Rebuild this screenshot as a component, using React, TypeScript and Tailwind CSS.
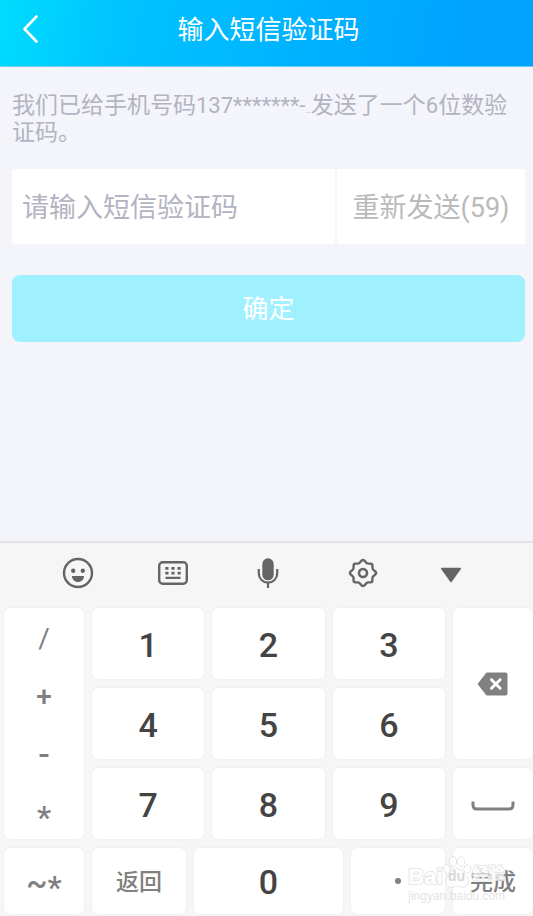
import React from "react";

function Key({ className = "", children, label }: { className?: string; children: React.ReactNode; label?: string }) {
  return (
    <button
      type="button"
      aria-label={label}
      className={`flex items-center justify-center rounded-md bg-white shadow-[0_0_2px_#dfe5ea] ${className}`}
    >
      {children}
    </button>
  );
}

function SmileIcon() {
  return (
    <svg viewBox="0 0 32 32" className="size-8" fill="none" aria-hidden="true">
      <circle cx="16" cy="16" r="14" stroke="#666464" strokeWidth="2.4" />
      <circle cx="11.2" cy="13.8" r="2.2" fill="#666464" />
      <circle cx="20.8" cy="13.8" r="2.2" fill="#666464" />
      <path d="M10 19h12c0 3.400-2.600 6-6 6s-6-2.600-6-6z" fill="#666464" />
    </svg>
  );
}

function KeyboardIcon() {
  return (
    <svg viewBox="0 0 32 32" className="size-8" fill="none" aria-hidden="true">
      <rect x="2.200" y="5.200" width="27.600" height="21.600" rx="3.500" stroke="#666464" strokeWidth="2.400" />
      <path
        d="M8.300 10h3.200v2.700H8.300zM14.400 10h3.200v2.700h-3.200zM20.500 10h3.200v2.700h-3.200zM8.300 14.700h3.200v2.700H8.300zM14.400 14.700h3.200v2.700h-3.200zM20.500 14.700h3.200v2.700h-3.200zM8.500 19.800h15v2.200h-15z"
        fill="#666464"
      />
    </svg>
  );
}

function MicIcon() {
  return (
    <svg viewBox="0 0 32 32" className="size-8" fill="none" aria-hidden="true">
      <rect x="10.300" y="1.300" width="11.400" height="22" rx="5.700" fill="#666464" />
      <path d="M6.800 12v4.500a9.200 9.200 0 0 0 18.400 0V12" stroke="#666464" strokeWidth="2.200" />
      <path d="M16 25v6" stroke="#666464" strokeWidth="2.200" />
    </svg>
  );
}

function GearIcon() {
  return (
    <svg viewBox="0 0 32 32" className="size-8" fill="none" stroke="#666464" aria-hidden="true">
      <path
        d="M14.600 3.600Q16 2.200 17.400 3.600L19.400 5.800Q20.200 6.600 21.400 6.600L23.600 6.600Q25.400 6.600 25.400 8.400L25.400 10.600Q25.400 11.800 26.200 12.600L28.400 14.600Q29.800 16 28.400 17.400L26.200 19.400Q25.400 20.200 25.400 21.400L25.400 23.600Q25.400 25.400 23.600 25.400L21.400 25.400Q20.200 25.400 19.400 26.200L17.400 28.400Q16 29.800 14.600 28.400L12.600 26.200Q11.800 25.400 10.600 25.400L8.400 25.400Q6.600 25.400 6.600 23.600L6.600 21.400Q6.600 20.200 5.800 19.400L3.600 17.400Q2.200 16 3.600 14.600L5.800 12.600Q6.600 11.800 6.600 10.600L6.600 8.400Q6.600 6.600 8.400 6.600L10.600 6.600Q11.800 6.600 12.600 5.800Z"
        strokeWidth="2.400"
        strokeLinejoin="round"
      />
      <circle cx="16" cy="16" r="4" strokeWidth="2.600" />
    </svg>
  );
}

function Watermark() {
  return (
    <div
      aria-hidden="true"
      className="pointer-events-none absolute right-7 bottom-3 flex flex-col font-['Liberation_Sans','Noto_Sans_CJK_SC',sans-serif] leading-none opacity-80"
    >
      <div className="flex h-8 items-end text-[22px] font-bold text-white [-webkit-text-stroke:2px_#e2e2e2] [paint-order:stroke]">
        <span>Bai</span>
        <span className="relative flex h-8 w-7 shrink-0 items-end justify-center">
          <svg viewBox="0 0 28 32" className="absolute inset-0 h-8 w-7" fill="#fff" stroke="#c8c8c8" aria-hidden="true">
            <ellipse cx="3.800" cy="13" rx="3" ry="4" transform="rotate(-15 3.800 13)" strokeWidth="1" />
            <ellipse cx="10" cy="5.500" rx="3.200" ry="4.600" />
            <ellipse cx="18" cy="5.500" rx="3.200" ry="4.600" />
            <ellipse cx="24.200" cy="13" rx="3" ry="4" transform="rotate(15 24.200 13)" />
            <path d="M14 13c5 0 6 4 9 7 4 5 2 11-3 11-3 0-4-1-6-1s-3 1-6 1c-5 0-7-6-3-11 3-3 4-7 9-7z" />
          </svg>
          <span className="relative pb-0.5 text-sm text-[#cfcfcf] [-webkit-text-stroke:0px]">du</span>
        </span>
        <span className="pb-0.5 pl-0.5 text-base">经验</span>
      </div>
      <div className="text-xs text-[#dedede]">jingyan.baidu.com</div>
    </div>
  );
}

export default function App() {
  return (
    <div className="flex min-h-screen flex-col bg-[#f4f5fa] font-[Roboto,'Noto_Sans_CJK_SC',sans-serif]">
      <header className="grid h-[67px] grid-cols-[60px_1fr_56px] items-center border-b border-[#6cc9f8] bg-[linear-gradient(100deg,#00dcff_0%,#00c4ff_22%,#00a4ff_85%)] pb-1.5 text-white">
        <button type="button" aria-label="返回上一页" className="flex justify-center pb-0.5">
          <svg viewBox="0 0 18 30" className="h-[30px] w-[18px]" fill="none" stroke="#fff" aria-hidden="true">
            <path d="M15.500 2.500 3.500 15l12 12.500" strokeWidth="2.600" strokeLinecap="round" strokeLinejoin="round" />
          </svg>
        </button>
        <h1 className="text-center text-[26px] leading-9">输入短信验证码</h1>
      </header>

      <main className="flex flex-col pr-2 pl-3">
        <p className="pt-[25px] text-[23px] leading-[27px] text-[#b3b3c1]">
          我们已给手机号码<span className="text-[22px] leading-none">137*******-</span>
          <span className="text-[10px] leading-none">..</span>发送了一个
          <span className="text-[22px] leading-none">6</span>位数验证码。
        </p>
        <form className="mt-[23px] flex flex-col" onSubmit={(e) => e.preventDefault()}>
          <div className="flex h-[75px] bg-white">
            <input
              type="text"
              aria-label="短信验证码"
              placeholder="请输入短信验证码"
              className="min-w-0 flex-1 px-2.5 pt-1 text-[27px] outline-none placeholder:text-[#b3b3c1] placeholder:opacity-100"
            />
            <button type="button" className="w-[190px] border-l-2 border-[#f4f5f8] pt-1 text-[27px] text-[#bababa]">
              重新发送(59)
            </button>
          </div>
          <button type="submit" className="mt-[31px] h-[67px] rounded-lg bg-[#9ff1ff] pt-0.5 text-[26px] text-white">
            确定
          </button>
        </form>
      </main>

      <section aria-label="键盘" className="relative mt-auto border-t-2 border-[#e2e3e8] bg-[#f6f6f6] pb-0.5 pl-1">
        <div className="grid h-[65px] grid-cols-5 items-center pr-7 pb-1.5 pl-[26px]">
          <button type="button" aria-label="表情" className="flex justify-center"><SmileIcon /></button>
          <button type="button" aria-label="切换键盘" className="flex justify-center"><KeyboardIcon /></button>
          <button type="button" aria-label="语音" className="flex justify-center"><MicIcon /></button>
          <button type="button" aria-label="设置" className="flex justify-center"><GearIcon /></button>
          <button type="button" aria-label="收起" className="flex justify-center pt-1 pr-3.5">
            <svg viewBox="0 0 22 16" className="h-4 w-[22px]" aria-hidden="true">
              <path d="M1.700 1.500h18.600L11 14.500z" fill="#666464" stroke="#666464" strokeWidth="1.500" strokeLinejoin="round" />
            </svg>
          </button>
        </div>

        <div className="grid grid-cols-[80px_1fr_1fr_1fr_80px] grid-rows-[71px_71px_71px] gap-x-2 gap-y-[9px] text-[34px] font-medium text-[#444]">
          <div className="row-span-3 grid grid-rows-4 rounded-md bg-white text-[28px] text-[#808080] shadow-[0_0_2px_#dfe5ea]">
            <button type="button" className="pt-1 font-normal">/</button>
            <button type="button" className="pt-1">+</button>
            <button type="button" className="pt-1 text-[34px]">-</button>
            <button type="button" className="pt-3 text-[32px]">*</button>
          </div>
          <Key className="pt-1">1</Key>
          <Key className="pt-1">2</Key>
          <Key className="pt-1">3</Key>
          <Key label="删除" className="row-span-2">
            <svg viewBox="0 0 32 24" className="h-6 w-8" aria-hidden="true">
              <path d="M9.500.5H28.500Q30.500.5 30.500 2.500V21.500Q30.500 23.500 28.500 23.500H9.500L.5 12z" fill="#808080" />
              <path d="m14.500 7.700 8.600 8.600m0-8.600-8.600 8.600" stroke="#fff" strokeWidth="3" strokeLinecap="round" />
            </svg>
          </Key>
          <Key className="pt-1">4</Key>
          <Key className="pt-1">5</Key>
          <Key className="pt-1">6</Key>
          <Key className="pt-1">7</Key>
          <Key className="pt-1">8</Key>
          <Key className="pt-1">9</Key>
          <Key label="空格" className="pt-1">
            <svg viewBox="0 0 44 12" className="h-3 w-11" fill="none" aria-hidden="true">
              <path d="M2 1.500V5q0 4 4 4h32q4 0 4-4V1.500" stroke="#808080" strokeWidth="3" />
            </svg>
          </Key>
        </div>

        <div className="mt-[9px] flex h-[66px] gap-2 text-[23px] font-medium text-[#808080]">
          <Key className="w-20 text-[32px]">
            <span className="pt-1">~</span>
            <span className="pt-3">*</span>
          </Key>
          <Key className="flex-[94] pt-1">返回</Key>
          <Key className="flex-[149] pt-0.5 text-[34px] text-[#444]">0</Key>
          <Key label="小数点" className="flex-[94]">
            <svg viewBox="0 0 6 6" className="size-1.5" aria-hidden="true">
              <circle cx="3" cy="3" r="3" fill="#808080" />
            </svg>
          </Key>
          <Key className="w-20 pt-1">完成</Key>
        </div>
        <Watermark />
      </section>
    </div>
  );
}
